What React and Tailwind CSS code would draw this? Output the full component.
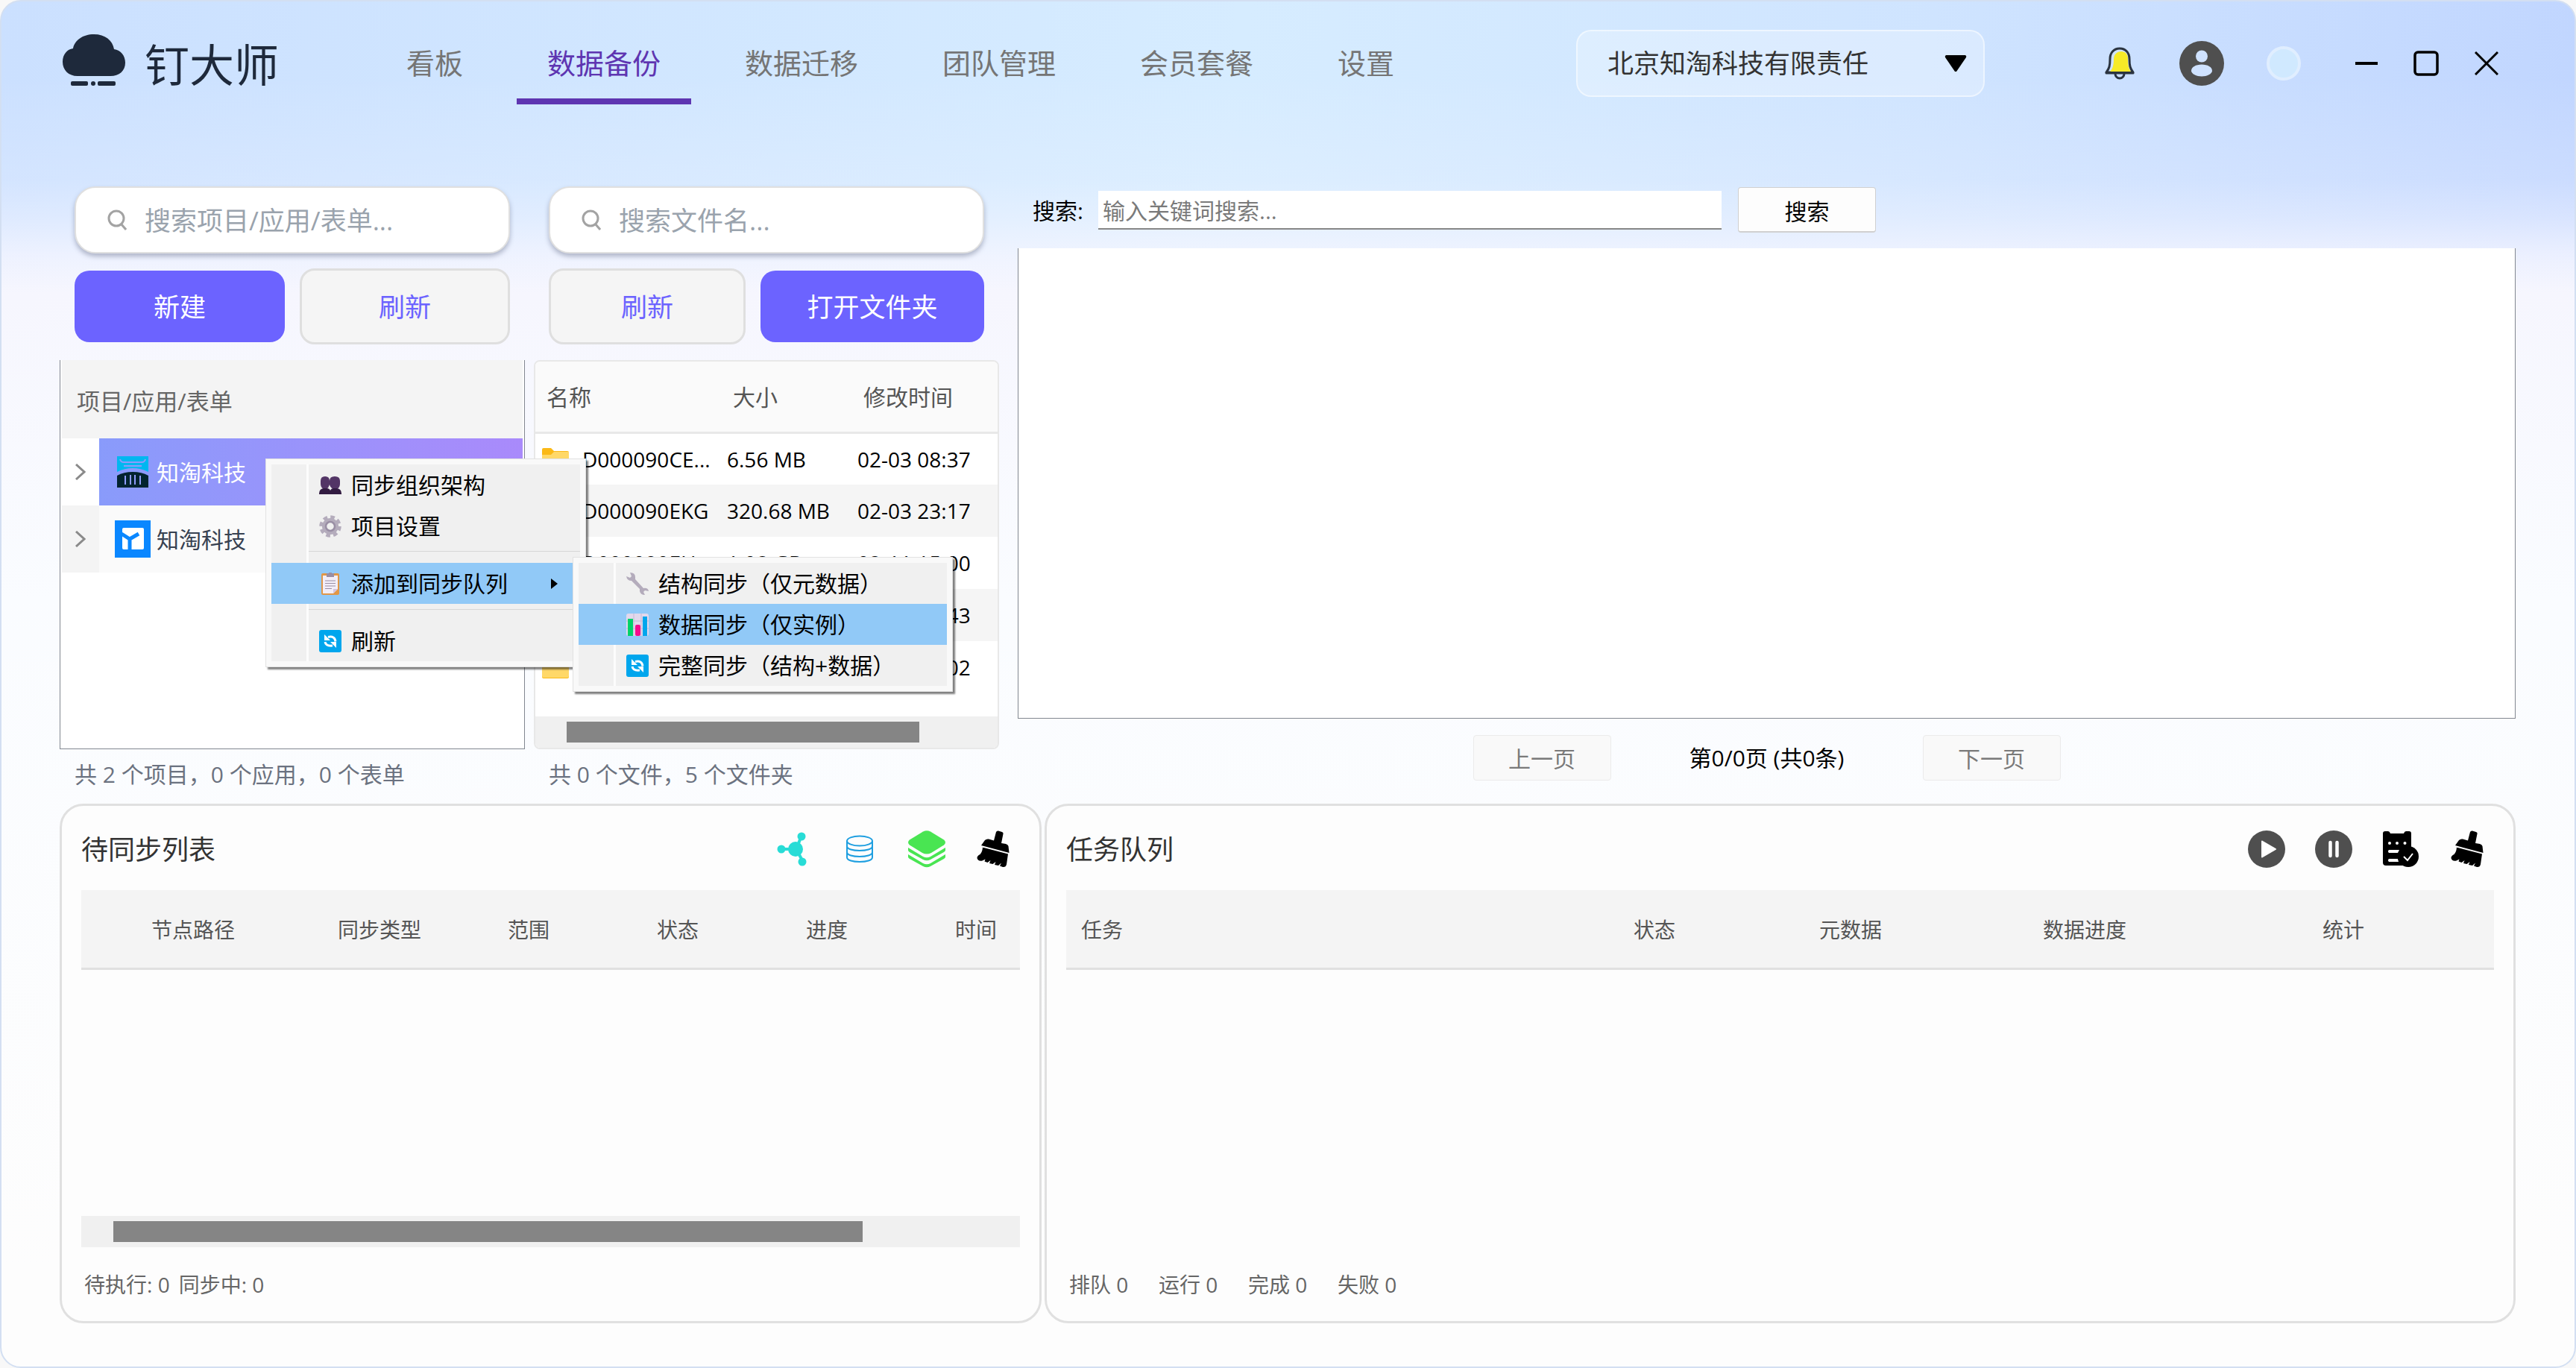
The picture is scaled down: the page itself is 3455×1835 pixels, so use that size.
// Desktop sync client: header, project tree, file list, search pane and task queues.

const TABS = ["看板", "数据备份", "数据迁移", "团队管理", "会员套餐", "设置"];

const FILES = [
  { name: "D000090CE...", size: "6.56 MB", time: "02-03 08:37" },
  { name: "D000090EKG", size: "320.68 MB", time: "02-03 23:17" },
  { name: "D000090EH...", size: "1.08 GB", time: "02-11 15:00" },
  { name: "D000090FA...", size: "2.41 MB", time: "02-03 18:43" },
  { name: "D000090GK...", size: "8.15 MB", time: "02-03 21:02" },
];

function CloudLogo() {
  return (
    <svg viewBox="0 0 84 70" className="h-[70px] w-[84px]" fill="#1e293b">
      <path d="M20 56C8 56 0 48 0 37c0-10 6-17 14-18C16 8 27 0 42 0s25 8 27 20c9 1 15 9 15 18 0 11-8 18-20 18z" />
      <rect x="11" y="63" width="23" height="6" rx="2" />
      <rect x="38" y="63" width="6" height="6" rx="3" />
      <rect x="47" y="63" width="24" height="6" rx="2" />
    </svg>
  );
}

function BellIcon() {
  return (
    <svg viewBox="0 0 40 44" className="h-11 w-10" fill="none">
      <path d="M14 36a6 6 0 0 0 12 0" stroke="#2b3440" strokeWidth="3" />
      <path
        d="M20 2C12 2 7 8 7 16c0 9-1 13-5 18h36c-4-5-5-9-5-18 0-8-5-14-13-14z"
        fill="#cfe2ff"
        stroke="#2b3440"
        strokeWidth="3"
        strokeLinejoin="round"
      />
      <path d="M22 6c6 0 9 4 9 10 0 8 1 13 4 17H7c3-3 5-8 5-16 0-7 4-11 10-11z" fill="#f7ea27" />
      <path d="M2 35h36" stroke="#2b3440" strokeWidth="3" strokeLinecap="round" />
    </svg>
  );
}

function AvatarIcon() {
  return (
    <svg viewBox="0 0 60 60" className="size-[60px]">
      <circle cx="30" cy="30" r="30" fill="#4f4f4f" />
      <g fill="#cfe2ff">
        <circle cx="30" cy="20.500" r="8" />
        <path d="M16 40c0-5 6-8.500 14-8.500S44 35 44 40c0 4-7 7.500-14 7.500S16 44 16 40z" />
      </g>
    </svg>
  );
}

function SearchIcon() {
  return (
    <svg viewBox="0 0 26 28" className="h-7 w-[26px] shrink-0" fill="none" stroke="#a3a3a3" strokeWidth="3">
      <circle cx="12" cy="12" r="10" />
      <path d="M18 19l7 8" />
    </svg>
  );
}

function NodesIcon() {
  return (
    <svg viewBox="0 0 50 50" className="size-[50px]" fill="#28dcd6">
      <path d="M11 25h20M30 25l7-18M30 25l9 17" stroke="#28dcd6" strokeWidth="4" />
      <circle cx="29" cy="25" r="10" />
      <circle cx="10" cy="25" r="5.5" />
      <circle cx="37" cy="8" r="5.5" />
      <circle cx="38" cy="42" r="5.5" />
    </svg>
  );
}

function DatabaseIcon() {
  return (
    <svg viewBox="0 0 50 50" className="size-[50px]" fill="none" stroke="#1f9fe0" strokeWidth="2">
      <ellipse cx="25" cy="14" rx="17" ry="6.5" />
      <path d="M8 14v22c0 4 8 6 17 6s17-2 17-6V14" />
      <path d="M8 21c0 4 8 6 17 6s17-2 17-6M8 29c0 4 8 6 17 6s17-2 17-6" />
    </svg>
  );
}

function LayersIcon() {
  return (
    <svg viewBox="0 0 50 50" className="size-[50px]" fill="#49e552">
      <path d="M20 1.500q5-2.500 10 0L48 12.500q4 3.500 0 7L31 30q-6 3-12 0L2 19.500q-4-3.500 0-7z" />
      <path d="M0 23l20 12q5 2.500 10 0l20-12v3.500q0 1-2 2.500L30 39q-5 2.500-10 0L2 29q-2-1.500-2-2.500z" />
      <path d="M0 32l20 12q5 2.500 10 0l20-12v3.500q0 1-2 2.500L30 48q-5 2.500-10 0L2 38q-2-1.500-2-2.500z" />
    </svg>
  );
}

function BrushIcon() {
  return (
    <svg viewBox="0 0 50 50" className="size-[50px]" fill="#000">
      <path d="M28 2q1-2 3-1.500l5 1.500q2 .5 1.500 2.500L35 17l6 1q3 1 3.500 3l1 9L8 20l5-7q2-2 5-1.500l7 2z" />
      <path d="M9.500 22.500L44 31.500l-2 14q-1 4-5 3.500l-4-1.500 2-4-4 3.500-5-1 1.500-4-4 3-4.500-1 1.500-4-4 3-4-1.500 1-3-4 2q-6 1-7-3.500 0-3 4-5 3-3 3.500-9.500z" />
    </svg>
  );
}

function PlayIcon() {
  return (
    <svg viewBox="0 0 50 50" className="size-[50px]">
      <circle cx="25" cy="25" r="25" fill="#4f4f4f" />
      <path d="M19 14.500l18 10.500-18 10.500z" fill="#fff" stroke="#fff" strokeWidth="2" strokeLinejoin="round" />
    </svg>
  );
}

function PauseIcon() {
  return (
    <svg viewBox="0 0 50 50" className="size-[50px]">
      <circle cx="25" cy="25" r="25" fill="#4f4f4f" />
      <path d="M20.500 16v18M29.500 16v18" stroke="#fff" strokeWidth="4.500" strokeLinecap="round" />
    </svg>
  );
}

function TaskDoneIcon() {
  return (
    <svg viewBox="0 0 50 50" className="size-[50px]">
      <path d="M1 4q0-3 3-3h4q2 0 3 3h18q1-3 3-3h4q3 0 3 3v39q0 4-4 4H5q-4 0-4-4z" fill="#000" />
      <g fill="#fff">
        <circle cx="10" cy="17" r="2" />
        <circle cx="20" cy="17" r="2" />
        <circle cx="30.500" cy="17" r="2" />
        <path d="M9 26h14l-2 4H9q-2-2 0-4zM9 38h12l1 4H9q-2-2 0-4z" />
      </g>
      <circle cx="35" cy="35" r="14" fill="#000" />
      <path d="M29 35l5 5 7-9" fill="none" stroke="#fff" strokeWidth="2" />
    </svg>
  );
}

function FolderIcon() {
  return (
    <svg viewBox="0 0 36 30" className="h-[30px] w-9">
      <path d="M0 2q0-2 2-2h10l4 4h18q2 0 2 2v22q0 2-2 2H2q-2 0-2-2z" fill="#fbb917" />
      <path d="M0 9h12l4-4h20v22q0 2-2 2H2q-2 0-2-2z" fill="#ffd868" />
    </svg>
  );
}

function PeopleIcon() {
  return (
    <svg viewBox="0 0 30 30" className="size-[30px]">
      <path d="M2 9q0-6 6-6t6 6q0-6 7-6t7 6v4q0 5-4 7h-5q-4-2-5-6-1 4-4 6H6q-4-2-4-7z" fill="#533566" />
      <path d="M0 26q0-6 6-7h4q4 0 5 3 1-3 5-3h4q6 1 6 7v1H0z" fill="#321b41" />
    </svg>
  );
}

function GearIcon() {
  return (
    <svg viewBox="0 0 30 30" className="size-[30px]" fill="none">
      <circle cx="15" cy="15" r="12" stroke="#b4acbc" strokeWidth="5.500" strokeDasharray="5.400 4" />
      <circle cx="15" cy="15" r="8.500" stroke="#b4acbc" strokeWidth="5" />
      <circle cx="15" cy="15" r="6" stroke="#998ea4" strokeWidth="2.500" />
    </svg>
  );
}

function ClipboardIcon() {
  return (
    <svg viewBox="0 0 30 30" className="size-[30px]">
      <rect x="3" y="1" width="24" height="29" rx="2" fill="#e19747" />
      <path d="M5 4h20v18l-6 6H5z" fill="#f3eef8" />
      <path d="M19 28v-6h6z" fill="#d3c4e0" />
      <path d="M10 1h3a2 2 0 0 1 4 0h3v5H10z" fill="#998ea4" />
      <path d="M8 11h14M8 14.500h14M8 18h14M8 21.500h9" stroke="#998ea4" />
    </svg>
  );
}

function RefreshIcon() {
  return (
    <svg viewBox="0 0 30 30" className="size-[30px]">
      <rect width="30" height="30" rx="3" fill="#00a6ed" />
      <g fill="none" stroke="#fff" strokeWidth="3">
        <path d="M12 9.500q9-2 10 6" />
        <path d="M18 21q-9 1-10-5" />
      </g>
      <path d="M7 6v8h8zM23 24v-8h-8z" fill="#fff" />
    </svg>
  );
}

function WrenchIcon() {
  return (
    <svg viewBox="0 0 30 30" className="size-[30px]">
      <path
        d="M5 0q7 0 7 6v3l11 12q6-1 7 4l-5-1-2 2 2 4q-6 0-7-5v-3L7 11Q1 11 0 5l5 2 2-2z"
        fill="#b4acbc"
      />
    </svg>
  );
}

function ChartIcon() {
  return (
    <svg viewBox="0 0 30 30" className="size-[30px]">
      <rect width="30" height="30" rx="3" fill="#e1d8ec" />
      <path d="M0 10h30M0 20h30M10 0v30M20 0v30" stroke="#c6b9d6" />
      <rect x="2" y="7" width="7" height="23" fill="#00d26a" />
      <rect x="12" y="15" width="7" height="15" rx="2" fill="#f70a8d" />
      <rect x="22" y="4" width="6" height="26" fill="#00a6ed" />
    </svg>
  );
}

function HallIcon() {
  return (
    <svg viewBox="0 0 42 42" className="size-[42px]">
      <path d="M0 0h42v21q-10-5-21-5T0 21z" fill="#00b7f0" />
      <path d="M4 4q1 4 5 4h24q4 0 5-4M9 13h24" fill="none" stroke="#8f9bfb" strokeWidth="2" />
      <path d="M0 42V26q9-5 21-5t21 5v16z" fill="#02232f" />
      <path d="M11 26v12M18 25v13M24 25v13M31 26v12" stroke="#8f9bfb" strokeWidth="2" />
    </svg>
  );
}

function BoxIcon() {
  return (
    <svg viewBox="0 0 48 50" className="h-[50px] w-12">
      <path d="M0 0h48v50H0z" fill="#0a87ff" />
      <rect x="10" y="10" width="29" height="29" rx="2" fill="#fff" />
      <path d="M9 18l11 7 12-7M20 24v15" fill="none" stroke="#0a87ff" strokeWidth="5" />
    </svg>
  );
}

function Chevron() {
  return (
    <svg viewBox="0 0 14 22" className="h-[22px] w-3.5" fill="none" stroke="#8a8a8a" strokeWidth="3">
      <path d="M1 1l11 10L1 21" />
    </svg>
  );
}

function Header() {
  return (
    <header className="flex h-[170px] items-start pl-[82px] pr-[102px]">
      <div className="flex h-[170px] w-[420px] shrink-0 items-start gap-[26px] pt-11 text-[#1e293b]">
        <CloudLogo />
        <h1 className="text-[60px] leading-[82px]">钉大师</h1>
      </div>
      <nav className="flex gap-[31px] pt-[26px]">
        {TABS.map((tab) => (
          <a
            key={tab}
            href="#"
            className={
              tab === "数据备份"
                ? "h-28 border-b-8 border-[#5e35b1] px-[41px] text-[38px] leading-[112px] text-[#5e35b1]"
                : "h-28 px-[41px] text-[38px] leading-[112px] text-[#757575]"
            }
          >
            {tab}
          </a>
        ))}
      </nav>
      <div className="ml-auto flex h-[166px] items-center">
        <div className="relative mr-[161px] flex">
          <select
            aria-label="公司"
            className="h-[90px] w-[548px] appearance-none rounded-[20px] border-2 border-white/50 bg-white/25 px-10 text-[35px] text-[#333]"
          >
            <option>北京知淘科技有限责任</option>
          </select>
          <svg viewBox="0 0 30 24" className="pointer-events-none absolute right-6 top-[33px] h-6 w-[30px]">
            <path d="M2 1h26q2 1 1 3L16 23h-2L1 4Q0 2 2 1z" />
          </svg>
        </div>
        <button aria-label="通知" className="mr-[60px]"><BellIcon /></button>
        <button aria-label="账户" className="mr-[57px]"><AvatarIcon /></button>
        <button aria-label="主题" className="mr-[73px] size-[46px] rounded-full border-4 border-[#e0eeff] bg-[#d0e9ff]" />
        <button aria-label="最小化" className="mr-12">
          <svg viewBox="0 0 30 32" className="h-8 w-[30px]" stroke="#000" strokeWidth="4"><path d="M0 16h30" /></svg>
        </button>
        <button aria-label="最大化" className="mr-12">
          <svg viewBox="0 0 34 34" className="size-[34px]" fill="none" stroke="#000" strokeWidth="3.500">
            <rect x="2" y="2" width="30" height="30" rx="4" />
          </svg>
        </button>
        <button aria-label="关闭">
          <svg viewBox="0 0 32 32" className="size-8" stroke="#000" strokeWidth="3"><path d="M1 1l30 30M31 1L1 31" /></svg>
        </button>
      </div>
    </header>
  );
}

function SearchBox({ label }) {
  return (
    <label className="flex h-[90px] items-center gap-6 rounded-[28px] border-2 border-[#e0e0e0] bg-white px-[42px] shadow-[0_4px_6px_rgba(60,70,100,0.35)]">
      <SearchIcon />
      <input
        aria-label={label}
        placeholder={label}
        className="w-full min-w-0 bg-transparent pt-0.5 text-[35px] outline-none placeholder:text-[#9aa3ad]"
      />
    </label>
  );
}

function MenuItem({ icon, children, active, arrow }) {
  return (
    <button
      className={
        active
          ? "relative flex h-[55px] w-full items-center bg-[#91c9f7] pl-[64px] text-left text-[30px]"
          : "relative flex h-[55px] w-full items-center pl-[64px] text-left text-[30px]"
      }
    >
      {icon}
      <span className="pl-[13px]">{children}</span>
      {arrow && (
        <svg viewBox="0 0 9 14" className="ml-auto mr-[30px] h-3.5 w-[9px]"><path d="M0 0l9 7-9 7z" /></svg>
      )}
    </button>
  );
}

const MENU =
  "absolute z-10 border border-[#e2e2e2] bg-[#f9f9f9] p-[7px] text-black shadow-[3px_3px_2px_rgba(0,0,0,0.5)]";
const MENU_INNER = "bg-[linear-gradient(90deg,#f0f0f0_47px,#fcfcfc_47px,#fcfcfc_50px,#f0f0f0_50px)]";

function ContextMenu() {
  return (
    <div className={`${MENU} left-[275px] top-[132px] w-[430px]`}>
      <div className={MENU_INNER}>
        <MenuItem icon={<PeopleIcon />}>同步组织架构</MenuItem>
        <MenuItem icon={<GearIcon />}>项目设置</MenuItem>
        <hr className="mb-[15px] ml-[50px] mt-1.5 border-[#d6d6d6]" />
        <div className="relative">
          <MenuItem icon={<ClipboardIcon />} active arrow>添加到同步队列</MenuItem>
          <div className={`${MENU} -top-2 left-[404px] w-[510px]`}>
            <div className={MENU_INNER}>
              <MenuItem icon={<WrenchIcon />}>结构同步（仅元数据）</MenuItem>
              <MenuItem icon={<ChartIcon />} active>数据同步（仅实例）</MenuItem>
              <MenuItem icon={<RefreshIcon />}>完整同步（结构+数据）</MenuItem>
            </div>
          </div>
        </div>
        <hr className="mb-3.5 ml-[50px] mt-[7px] border-[#d6d6d6]" />
        <MenuItem icon={<RefreshIcon />}>刷新</MenuItem>
      </div>
    </div>
  );
}

const PRIMARY = "my-[3px] rounded-[20px] bg-[#6c63ff] pt-0.5 text-[35px] text-white";
const SECONDARY = "rounded-[20px] border-3 border-[#dfdfdf] bg-[#f5f5f5] pt-0.5 text-[35px] text-[#6c63ff]";

function ProjectPane() {
  return (
    <section className="w-[624px] shrink-0">
      <div className="px-5">
        <SearchBox label="搜索项目/应用/表单..." />
        <div className="mt-5 grid h-[102px] grid-cols-2 gap-5">
          <button className={PRIMARY}>新建</button>
          <button className={SECONDARY}>刷新</button>
        </div>
      </div>
      <div className="relative mt-[21px] h-[522px] border border-t-0 border-[#828790] bg-white px-0.5">
        <h2 className="h-[105px] bg-[#f4f4f4] px-5 text-[31px] leading-[110px] text-[#666]">项目/应用/表单</h2>
        <div className="flex h-[90px] items-stretch">
          <button aria-label="展开" className="flex w-[50px] items-center justify-center"><Chevron /></button>
          <div className="flex flex-1 items-center gap-[11px] bg-linear-to-r from-[#899bfb] to-[#a98afb] pl-6 text-[30px] text-white">
            <HallIcon />
            知淘科技
          </div>
        </div>
        <div className="flex h-[90px] items-stretch bg-[#f4f4f4]">
          <button aria-label="展开" className="flex w-[50px] items-center justify-center"><Chevron /></button>
          <div className="flex flex-1 items-center gap-2 bg-[#fafafa] pl-[21px] text-[30px] text-[#374151]">
            <BoxIcon />
            知淘科技
          </div>
        </div>
        <ContextMenu />
      </div>
      <p className="px-5 text-[30px] leading-[68px] text-[#6b7280]">共 2 个项目，0 个应用，0 个表单</p>
    </section>
  );
}

function FilePane() {
  return (
    <section className="ml-3 w-[624px] shrink-0">
      <div className="px-5">
        <SearchBox label="搜索文件名..." />
        <div className="mt-5 flex h-[102px] gap-5">
          <button className={`${SECONDARY} w-[264px]`}>刷新</button>
          <button className={`${PRIMARY} flex-1`}>打开文件夹</button>
        </div>
      </div>
      <div className="mt-[21px] flex h-[522px] flex-col overflow-hidden rounded-lg border-2 border-[#e8e8e8] bg-white">
        <table className="w-full table-fixed text-left">
          <thead>
            <tr className="h-[95px] border-b-3 border-[#e8e8e8] bg-[#fafafa] text-[30px] text-[#555]">
              <th className="w-[250px] pl-[15px] pt-0.5 font-normal">名称</th>
              <th className="w-[175px] pl-[15px] pt-0.5 font-normal">大小</th>
              <th className="pl-[15px] pt-0.5 font-normal">修改时间</th>
            </tr>
          </thead>
          <tbody>
            {FILES.map((file) => (
              <tr key={file.name} className="h-[70px] whitespace-nowrap text-[28px] text-black even:bg-[#f5f5f5]">
                <td className="pl-[9px]">
                  <div className="flex items-center gap-[18px]">
                    <FolderIcon />
                    {file.name}
                  </div>
                </td>
                <td className="pl-[7px]">{file.size}</td>
                <td className="pl-[7px]">{file.time}</td>
              </tr>
            ))}
          </tbody>
        </table>
        <div className="mt-auto h-[42px] bg-[#f0f0f0] px-[42px] py-[7px]">
          <div className="h-7 w-[473px] bg-[#858585]" />
        </div>
      </div>
      <p className="px-5 text-[30px] leading-[68px] text-[#6b7280]">共 0 个文件，5 个文件夹</p>
    </section>
  );
}

function SearchPane() {
  return (
    <section className="ml-[25px] flex min-w-0 flex-1 flex-col">
      <div className="flex h-[63px] items-center pl-5">
        <label htmlFor="keyword" className="w-[88px] pt-0.5 text-[30px] text-black">搜索:</label>
        <input
          id="keyword"
          placeholder="输入关键词搜索..."
          className="h-[52px] w-[836px] border-b-2 border-[#868686] bg-white px-1.5 pt-1 text-[30px] outline-none placeholder:text-[#7a7a7a]"
        />
        <button className="ml-[22px] h-[61px] w-[185px] rounded border border-b-2 border-[#d0d0d0] bg-[#fdfdfd] pt-1 text-[30px] text-black">
          搜索
        </button>
      </div>
      <div className="mt-5 h-[631px] border border-t-0 border-[#828790] bg-white" />
      <div className="mt-[22px] flex items-center justify-center text-[30px]">
        <button disabled className="h-[61px] w-[185px] rounded border border-[#ebebeb] bg-[#f9f9f9] pt-0.5 text-[#7a7a7a]">上一页</button>
        <span className="w-[418px] text-center text-black">第0/0页 (共0条)</span>
        <button disabled className="h-[61px] w-[185px] rounded border border-[#ebebeb] bg-[#f9f9f9] pt-0.5 text-[#7a7a7a]">下一页</button>
      </div>
    </section>
  );
}

function Panel({ title, actions, className, children }) {
  return (
    <section className={`flex flex-col rounded-[32px] border-3 border-[#e0e0e0] bg-[#fdfdfd] px-[26px] ${className}`}>
      <div className="flex h-[113px] items-center justify-between pr-2.5">
        <h2 className="pt-1 text-[36px] text-[#333]">{title}</h2>
        <div className="flex gap-10 pt-0.5">
          {actions.map(([label, icon]) => (
            <button key={label} aria-label={label}>{icon}</button>
          ))}
        </div>
      </div>
      {children}
    </section>
  );
}

const HEAD_ROW = "h-[105px] border-b-3 border-[#e0e0e0] bg-[#f4f4f4] text-[28px] text-[#555]";

function PendingPanel() {
  return (
    <Panel
      title="待同步列表"
      className="w-[1317px] shrink-0"
      actions={[
        ["结构同步", <NodesIcon />],
        ["数据同步", <DatabaseIcon />],
        ["完整同步", <LayersIcon />],
        ["清空", <BrushIcon />],
      ]}
    >
      <div className="flex-1 overflow-hidden">
        <table className="w-[1300px] table-fixed">
          <thead>
            <tr className={HEAD_ROW}>
              <th className="w-[300px] pt-0.5 font-normal">节点路径</th>
              <th className="w-[200px] pt-0.5 font-normal">同步类型</th>
              <th className="w-[200px] pt-0.5 font-normal">范围</th>
              <th className="w-[200px] pt-0.5 font-normal">状态</th>
              <th className="w-[200px] pt-0.5 font-normal">进度</th>
              <th className="w-[200px] pt-0.5 font-normal">时间</th>
            </tr>
          </thead>
        </table>
      </div>
      <div className="h-[42px] bg-[#f0f0f0] px-[43px] py-[7px]">
        <div className="h-7 w-[1005px] bg-[#858585]" />
      </div>
      <p className="h-[99px] pl-1 text-[28px] leading-[100px] text-[#666]">
        待执行: 0<span className="pl-3">同步中: 0</span>
      </p>
    </Panel>
  );
}

function QueuePanel() {
  return (
    <Panel
      title="任务队列"
      className="min-w-0 flex-1"
      actions={[
        ["开始", <PlayIcon />],
        ["暂停", <PauseIcon />],
        ["任务记录", <TaskDoneIcon />],
        ["清空", <BrushIcon />],
      ]}
    >
      <div className="flex-1">
        <table className="w-full table-fixed">
          <thead>
            <tr className={HEAD_ROW}>
              <th className="pl-5 pt-0.5 text-left font-normal">任务</th>
              <th className="w-[188px] pt-0.5 font-normal">状态</th>
              <th className="w-[338px] pt-0.5 font-normal">元数据</th>
              <th className="w-[290px] pt-0.5 font-normal">数据进度</th>
              <th className="w-[404px] pt-0.5 font-normal">统计</th>
            </tr>
          </thead>
        </table>
      </div>
      <div className="flex h-[99px] pl-1 text-[28px] leading-[100px] text-[#666]">
        {["排队 0", "运行 0", "完成 0", "失败 0"].map((stat) => (
          <span key={stat} className="w-[120px]">{stat}</span>
        ))}
      </div>
    </Panel>
  );
}

export default function App() {
  return (
    <div className="min-h-screen bg-[#f8f8f8] font-['Open_Sans','Noto_Sans_CJK_SC',sans-serif]">
      <div className="flex min-h-screen flex-col rounded-[28px] border-2 border-[#d3dff2] bg-[linear-gradient(to_bottom,rgba(246,246,255,0)_100px,rgba(246,246,255,0.2)_240px,rgba(246,246,255,0.45)_290px,rgba(246,246,255,0.8)_340px,#f6f6fe_390px,#fafcff_800px,#fdfdfd_1700px),linear-gradient(98deg,#cbe0ff_0%,#d6ecff_45%,#cfe4ff_70%,#bdd2ff_100%)]">
        <Header />
        <main className="flex flex-1 flex-col pb-[58px] pl-[78px] pr-[79px] pt-[78px]">
          <div className="flex">
            <ProjectPane />
            <FilePane />
            <SearchPane />
          </div>
          <div className="mt-[5px] flex flex-1 gap-1">
            <PendingPanel />
            <QueuePanel />
          </div>
        </main>
      </div>
    </div>
  );
}
